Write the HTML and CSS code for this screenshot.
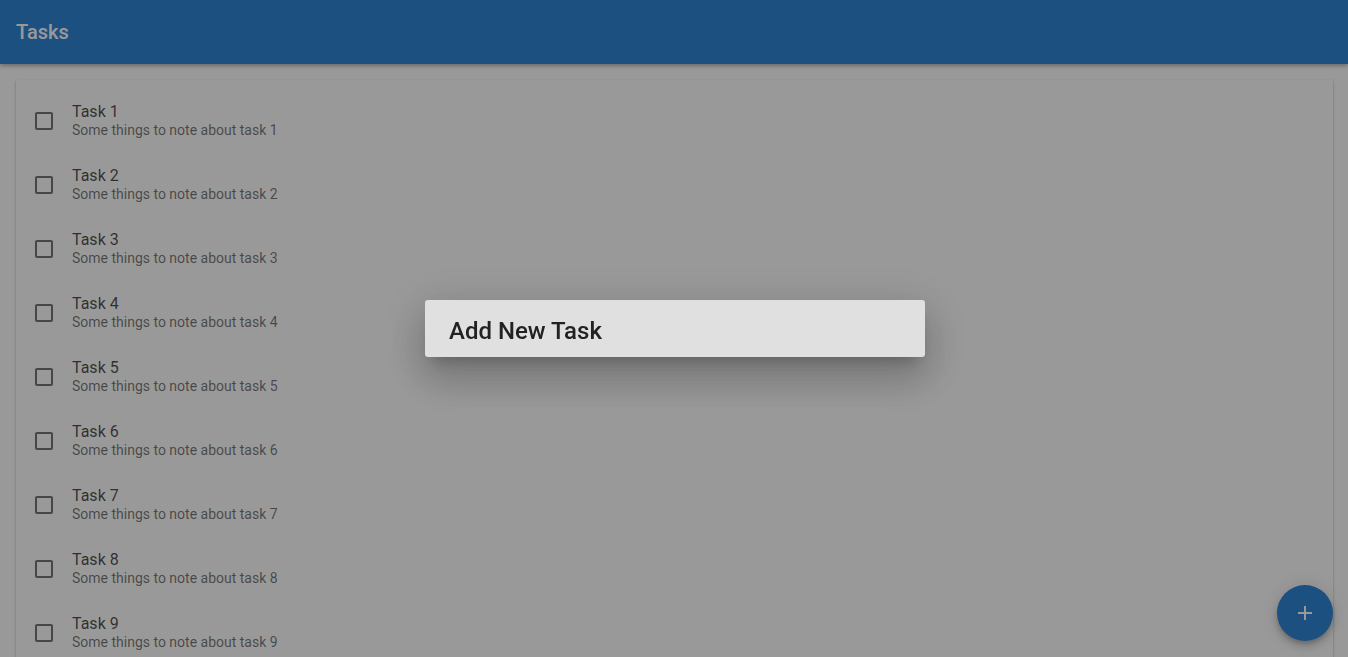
FILE: index.html
```html
<!DOCTYPE html>
<html>
<head>
<meta charset="utf-8">
<link rel="stylesheet" href="styles.css">
</head>
<body>
<header class="toolbar"><span class="title">Tasks</span></header>
<main class="content">
  <ul class="card list">
    <li class="item"><span class="box"></span><div class="text"><div class="t">Task 1</div><div class="s">Some things to note about task 1</div></div></li>
    <li class="item"><span class="box"></span><div class="text"><div class="t">Task 2</div><div class="s">Some things to note about task 2</div></div></li>
    <li class="item"><span class="box"></span><div class="text"><div class="t">Task 3</div><div class="s">Some things to note about task 3</div></div></li>
    <li class="item"><span class="box"></span><div class="text"><div class="t">Task 4</div><div class="s">Some things to note about task 4</div></div></li>
    <li class="item"><span class="box"></span><div class="text"><div class="t">Task 5</div><div class="s">Some things to note about task 5</div></div></li>
    <li class="item"><span class="box"></span><div class="text"><div class="t">Task 6</div><div class="s">Some things to note about task 6</div></div></li>
    <li class="item"><span class="box"></span><div class="text"><div class="t">Task 7</div><div class="s">Some things to note about task 7</div></div></li>
    <li class="item"><span class="box"></span><div class="text"><div class="t">Task 8</div><div class="s">Some things to note about task 8</div></div></li>
    <li class="item"><span class="box"></span><div class="text"><div class="t">Task 9</div><div class="s">Some things to note about task 9</div></div></li>
  </ul>
</main>
<button class="fab" aria-label="Add">
  <svg width="14" height="14" viewBox="0 0 14 14"><path d="M7 0v14M0 7h14" stroke="#fff" stroke-width="2"/></svg>
</button>
<div class="overlay"></div>
<div class="dialog"><h2 class="dtitle">Add New Task</h2></div>
</body>
</html>
```
FILE: styles.css
```css
html, body { margin: 0; padding: 0; height: 100%; overflow: hidden; }
body { font-family: Roboto, "Noto Sans", sans-serif; background: #fff; color: rgba(0,0,0,.87); }
.toolbar {
  height: 64px; background: #2f85d8; color: #fff;
  display: flex; align-items: center; padding: 0 16px;
  box-shadow: 0 2px 4px rgba(0,0,0,.3); position: relative; z-index: 2;
}
.title { font-size: 20px; font-weight: 500; }
.content { padding: 16px 15px 0 16px; }
.card {
  margin: 0; padding: 9px 0 8px; list-style: none; background: #fff;
  box-shadow: 0 1px 3px rgba(0,0,0,.2), 0 1px 1px rgba(0,0,0,.14), 0 2px 1px -1px rgba(0,0,0,.12);
}
.item { height: 64px; display: flex; align-items: center; padding-left: 19px; }
.box {
  width: 14px; height: 14px; border: 2px solid rgba(0,0,0,.54); border-radius: 2px;
  flex: none; margin-right: 19px;
}
.text { display: flex; flex-direction: column; margin-top: -1px; }
.t { font-size: 16px; line-height: 18px; color: rgba(0,0,0,.7); }
.s { font-size: 14px; line-height: 18px; color: rgba(0,0,0,.54); }
.fab {
  position: fixed; right: 15px; bottom: 16px; width: 56px; height: 56px;
  border-radius: 50%; border: none; background: #2f85d8; padding: 0;
  display: flex; align-items: center; justify-content: center;
  box-shadow: 0 3px 5px -1px rgba(0,0,0,.2), 0 6px 10px rgba(0,0,0,.14), 0 1px 18px rgba(0,0,0,.12);
}
.overlay { position: fixed; inset: 0; background: rgba(0,0,0,.4); z-index: 5; }
.dialog {
  position: fixed; left: 425px; top: 300px; width: 500px; height: 57px; z-index: 6;
  background: #e0e0e0; border-radius: 3px; box-sizing: border-box; padding: 4px 24px 0;
  display: flex; align-items: center;
  box-shadow: 0 11px 15px -7px rgba(0,0,0,.2), 0 24px 38px 3px rgba(0,0,0,.14), 0 9px 46px 8px rgba(0,0,0,.12);
}
.dtitle { margin: 0; font-size: 24px; font-weight: 500; color: #222; }
```
